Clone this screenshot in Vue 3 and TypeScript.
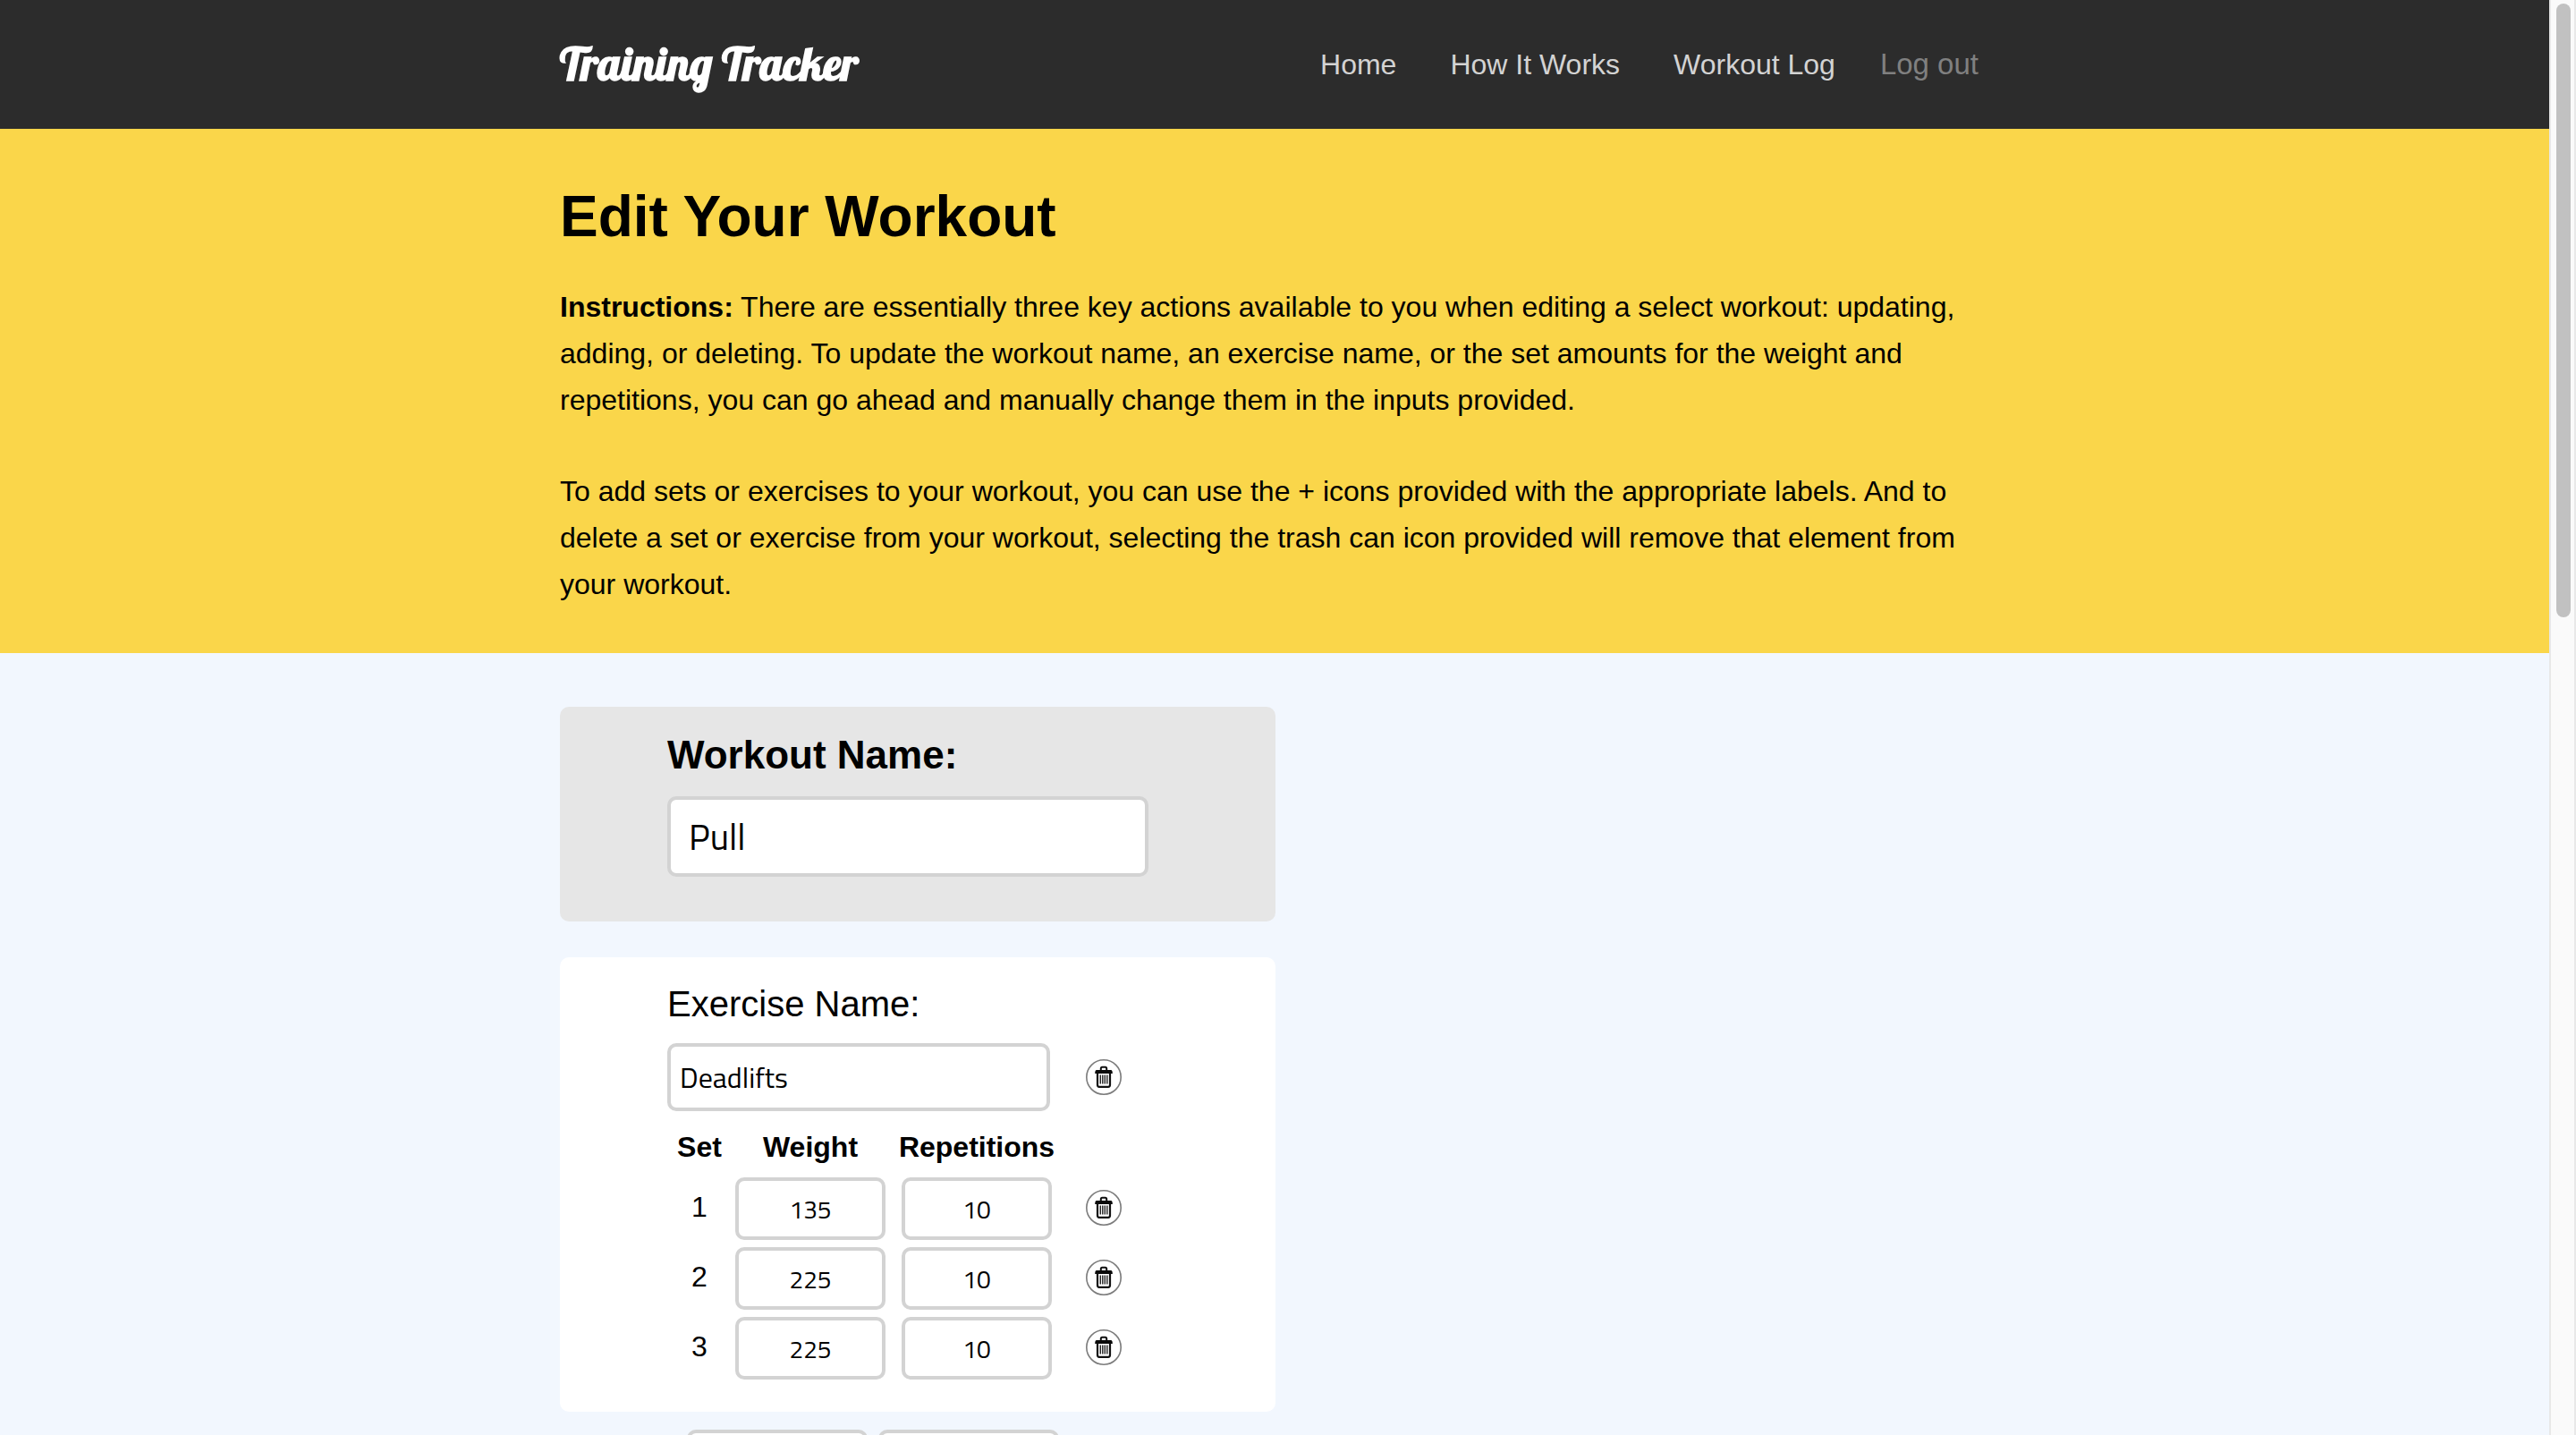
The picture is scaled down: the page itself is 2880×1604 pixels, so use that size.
<script setup lang="ts">
import { reactive } from 'vue'

interface WorkoutSet {
  weight: number
  reps: number
}

interface Exercise {
  name: string
  sets: WorkoutSet[]
}

const workout = reactive<{ name: string; exercise: Exercise }>({
  name: 'Pull',
  exercise: {
    name: 'Deadlifts',
    sets: [
      { weight: 135, reps: 10 },
      { weight: 225, reps: 10 },
      { weight: 225, reps: 10 },
    ],
  },
})

const newSet = reactive({ weight: '', reps: '' })

const links = ['Home', 'How It Works', 'Workout Log']

function removeSet(index: number) {
  workout.exercise.sets.splice(index, 1)
}
</script>

<template>
  <div class="app">
    <svg class="symbols" aria-hidden="true">
      <symbol id="trash-icon" viewBox="0 0 40 40">
        <circle cx="20" cy="20" r="19.2" fill="none" stroke="#7c7c7c" stroke-width="1.6" />
        <path d="M16.8 13v-2.6q0-1.6 1.6-1.6h3.2q1.6 0 1.6 1.6V13" fill="none" stroke="#111" stroke-width="2" />
        <path d="M12 12h16q1.8 0 1.8 4H10.2q0-4 1.8-4z" fill="#0a0a0a" />
        <path d="M13 15.5v13.3q0 2 2 2h10q2 0 2-2V15.5" fill="none" stroke="#111" stroke-width="2.2" />
        <path d="M16.3 17.5v10M18.8 17.5v10M21.3 17.5v10M23.8 17.5v10" stroke="#222" stroke-width="1.4" />
      </symbol>
    </svg>

    <div class="page">
      <header class="site-header">
        <div class="container header-row">
          <a class="logo" href="#">Training Tracker</a>
          <nav class="nav">
            <a v-for="link in links" :key="link" class="nav-link" href="#">{{ link }}</a>
            <button class="logout" type="button">Log out</button>
          </nav>
        </div>
      </header>

      <section class="intro">
        <div class="container">
          <h1>Edit Your Workout</h1>
          <p>
            <strong>Instructions:</strong> There are essentially three key actions available to you
            when editing a select workout: updating, adding, or deleting. To update the workout
            name, an exercise name, or the set amounts for the weight and repetitions, you can go
            ahead and manually change them in the inputs provided.
          </p>
          <p>
            To add sets or exercises to your workout, you can use the + icons provided with the
            appropriate labels. And to delete a set or exercise from your workout, selecting the
            trash can icon provided will remove that element from your workout.
          </p>
        </div>
      </section>

      <main class="container editor">
        <section class="card card-name">
          <label class="workout-label" for="workout-name">Workout Name:</label>
          <input id="workout-name" v-model="workout.name" class="field field-workout" type="text" />
        </section>

        <section class="card card-exercise">
          <label class="exercise-label" for="exercise-name">Exercise Name:</label>
          <div class="exercise-row">
            <input
              id="exercise-name"
              v-model="workout.exercise.name"
              class="field field-exercise"
              type="text"
            />
            <button class="trash" type="button" aria-label="Delete exercise">
              <svg aria-hidden="true"><use href="#trash-icon" /></svg>
            </button>
          </div>

          <table class="sets">
            <thead>
              <tr>
                <th class="col-set" scope="col">Set</th>
                <th class="col-weight" scope="col">Weight</th>
                <th class="col-reps" scope="col">Repetitions</th>
                <td class="col-action"></td>
              </tr>
            </thead>
            <tbody>
              <tr v-for="(set, index) in workout.exercise.sets" :key="index">
                <td class="cell-number">{{ index + 1 }}</td>
                <td>
                  <input v-model="set.weight" class="field field-set" type="text" :aria-label="`Set ${index + 1} weight`" />
                </td>
                <td>
                  <input v-model="set.reps" class="field field-set" type="text" :aria-label="`Set ${index + 1} repetitions`" />
                </td>
                <td class="cell-action">
                  <button class="trash" type="button" :aria-label="`Delete set ${index + 1}`" @click="removeSet(index)">
                    <svg aria-hidden="true"><use href="#trash-icon" /></svg>
                  </button>
                </td>
              </tr>
            </tbody>
          </table>
        </section>

        <form class="add-set" @submit.prevent>
          <input v-model="newSet.weight" class="field field-new" type="text" aria-label="New set weight" />
          <input v-model="newSet.reps" class="field field-new" type="text" aria-label="New set repetitions" />
        </form>
      </main>
    </div>

    <div class="scrollbar" aria-hidden="true">
      <div class="thumb"></div>
    </div>
  </div>
</template>

<style>
body {
  margin: 0;
  background: #f2f7fe;
}
</style>

<style scoped>
.app {
  display: flex;
  height: 100vh;
  overflow: hidden;
  font-family: 'Liberation Sans', Helvetica, Arial, sans-serif;
  font-size: 32px;
  line-height: 40px;
  color: #000;
}

.symbols {
  width: 0;
  height: 0;
}

.page {
  flex: 1;
  min-width: 0;
  background: #f2f7fe;
}

.container {
  max-width: 1598px;
  margin: 0 auto;
}

.site-header {
  background: #2c2c2c;
}

.header-row {
  display: flex;
  align-items: center;
  justify-content: space-between;
  min-height: 144px;
}

.logo {
  font-family: Lobster, 'Liberation Serif', serif;
  font-size: 50px;
  line-height: 60px;
  font-weight: 700;
  color: #fff;
  text-decoration: none;
}

.nav {
  display: flex;
  align-items: center;
  padding-right: 12px;
}

.nav-link {
  margin-right: 60px;
  color: #d3d3d3;
  text-decoration: none;
}

.nav-link:last-of-type {
  margin-right: 50px;
}

.logout {
  padding: 0;
  border: 0;
  background: none;
  font: inherit;
  font-size: 33px;
  color: #808080;
}

.intro {
  padding: 62px 0 51px;
  background: #fad64a;
}

h1 {
  margin: 0 0 39px;
  font-size: 64px;
  line-height: 72px;
}

p {
  margin: 0;
  line-height: 52px;
}

p + p {
  margin-top: 50px;
}

.editor {
  padding-top: 60px;
}

.card {
  box-sizing: border-box;
  width: 800px;
  max-width: 100%;
  padding: 28px 120px 32px;
  border-radius: 10px;
  background: #fff;
}

.card-name {
  margin-bottom: 40px;
  padding-bottom: 50px;
  background: #e6e6e6;
}

.workout-label,
.exercise-label {
  display: block;
  margin-bottom: 20px;
}

.workout-label {
  font-size: 44px;
  line-height: 52px;
  font-weight: 700;
}

.exercise-label {
  font-size: 40px;
  line-height: 48px;
}

.field {
  box-sizing: border-box;
  display: block;
  border: 4px solid #d3d3d3;
  border-radius: 10px;
  background: #fff;
  color: #000;
  font-family: 'Titillium Web', Roboto, sans-serif;
}

.field-workout {
  width: 538px;
  height: 90px;
  padding: 0 20px;
  font-size: 40px;
}

.exercise-row {
  display: flex;
  align-items: center;
  gap: 40px;
}

.field-exercise {
  width: 428px;
  height: 76px;
  padding: 0 10px;
  font-size: 32px;
}

.trash {
  display: block;
  width: 40px;
  height: 40px;
  padding: 0;
  border: 0;
  background: none;
}

.trash svg {
  display: block;
  width: 40px;
  height: 40px;
}

.sets {
  margin-top: 20px;
  border-collapse: collapse;
  table-layout: fixed;
  width: 508px;
}

.sets th,
.sets thead td {
  padding: 0 0 10px;
}

.col-set {
  width: 72px;
}

.col-weight {
  width: 176px;
}

.col-reps {
  width: 196px;
}

.col-action {
  width: 64px;
}

.sets tbody td {
  padding: 4px 0;
}

.sets tbody .cell-number {
  padding: 0 0 4px;
  text-align: center;
}

.sets tbody .cell-action {
  padding: 0 0 2px 24px;
}

.field-set {
  width: 168px;
  height: 70px;
  margin: 0 auto;
  padding: 0 8px;
  font-size: 28px;
  text-align: center;
}

.add-set {
  display: flex;
  gap: 12px;
  margin-top: 20px;
  padding-left: 142px;
}

.field-new {
  width: 202px;
  height: 70px;
  padding: 0 8px;
  font-size: 28px;
}

.scrollbar {
  box-sizing: border-box;
  width: 30px;
  padding: 4px 4px 4px 6px;
  border: solid #e8e8e8;
  border-width: 0 2px;
  background: #fafafa;
}

.thumb {
  width: 16px;
  height: 686px;
  border-radius: 8px;
  background: #c1c1c1;
}
</style>
